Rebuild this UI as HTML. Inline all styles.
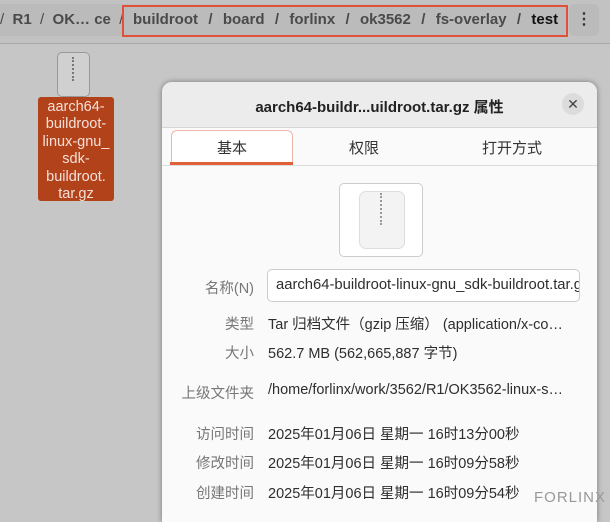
<!DOCTYPE html>
<html><head><meta charset="utf-8"><style>
body{margin:0;width:610px;height:514px;overflow:hidden;background:#c6c6c6;font-family:"Liberation Sans","Noto Sans CJK SC",sans-serif;position:relative}
.a{position:absolute}
.top{left:0;top:0;width:610px;height:43px;background:#c2c2c2;border-bottom:1px solid #a8a8a8}
.path{left:-6px;top:4px;width:572px;height:32px;background:#bbb;border-radius:6px}
.crumb{top:11px;font-size:15px;color:#4a4a4a;white-space:nowrap}
.box{left:122px;top:5px;width:442px;height:28px;border:2px solid #e0503a}
.kebab{left:569px;top:4px;width:30px;height:32px;background:#bbb;border-radius:6px;text-align:center;font-size:16px;line-height:32px;color:#333;font-weight:bold}
.zip{border:1px solid #999;background:#d0d0d0;border-radius:5px}
.lbl{left:38px;top:97px;width:76px;height:104px;background:#b2421a;border-radius:3px;color:#f5e0d8;font-size:14.5px;text-align:center;line-height:17.4px}
.dlg{left:162px;top:82px;width:435px;height:440px;background:#fafafa;border-radius:10px 10px 0 0;box-shadow:0 0 6px rgba(0,0,0,.4);overflow:hidden}
.hdr{left:0;top:0;width:435px;height:45px;background:#ececec;border-bottom:1px solid #d6d6d6}
.k{right:343px;font-size:14.5px;color:#777;text-align:right;white-space:nowrap}
.v{left:106px;font-size:14.5px;color:#2e2e2e;white-space:nowrap}
</style></head><body>
<div class="a top"></div>
<div class="a path"></div>
<div class="a crumb" style="left:0">/&nbsp;&nbsp;<b style="font-weight:600">R1</b>&nbsp;&nbsp;/&nbsp;&nbsp;<b style="font-weight:600">OK… ce</b>&nbsp;&nbsp;/</div>
<div class="a crumb" style="left:133px;font-weight:600;word-spacing:1px">buildroot &nbsp;/ &nbsp;board &nbsp;/ &nbsp;forlinx &nbsp;/ &nbsp;ok3562 &nbsp;/ &nbsp;fs-overlay &nbsp;/ &nbsp;<span style="color:#111">test</span></div>
<div class="a box"></div>
<div class="a kebab">⋮</div>
<div class="a zip" style="left:57px;top:52px;width:31px;height:43px"><div class="a" style="left:14px;top:4px;width:2px;height:24px;border-left:2px dotted #777"></div></div>
<div class="a lbl"><div style="padding-top:2px">aarch64-<br>buildroot-<br>linux-gnu_<br>sdk-<br>buildroot.<br>tar.gz</div></div>
<div class="a dlg">
 <div class="a hdr"></div>
 <div class="a" style="left:0;width:435px;top:14px;text-align:center;font-size:15px;font-weight:bold;color:#222">aarch64-buildr...uildroot.tar.gz 属性</div>
 <div class="a" style="left:400px;top:11px;width:22px;height:22px;border-radius:11px;background:#dcdcdc;text-align:center;line-height:22px;font-size:14px;color:#444">✕</div>
 <div class="a" style="left:9px;top:48px;width:120px;height:33px;border:1px solid #f0b8a8;border-bottom:none;border-radius:6px 6px 0 0;background:#fff"></div>
 <div class="a" style="left:8px;top:80px;width:123px;height:3px;background:#e0603a"></div>
 <div class="a" style="left:0;top:83px;width:435px;height:1px;background:#ddd"></div>
 <div class="a" style="left:55px;top:55px;font-size:15px;color:#333">基本</div>
 <div class="a" style="left:187px;top:55px;font-size:15px;color:#333">权限</div>
 <div class="a" style="left:320px;top:55px;font-size:15px;color:#333">打开方式</div>
 <div class="a" style="left:177px;top:101px;width:82px;height:72px;border:1px solid #ccc;border-radius:5px;background:#fff"></div>
 <div class="a" style="left:197px;top:109px;width:44px;height:56px;border:1px solid #ddd;border-radius:7px;background:#f3f3f3"><div class="a" style="left:20px;top:1px;width:2px;height:32px;border-left:2px dotted #999"></div></div>
 <div class="a" style="left:105px;top:187px;width:311px;height:31px;border:1px solid #ccc;border-radius:5px;background:#fff;overflow:hidden"><div class="a" style="left:8px;top:7px;font-size:14.8px;color:#2e2e2e;white-space:nowrap">aarch64-buildroot-linux-gnu_sdk-buildroot.tar.gz</div></div>
 <div class="a k" style="top:195px">名称(N)</div>
 <div class="a k" style="top:231px">类型</div><div class="a v" style="top:231px">Tar 归档文件（gzip 压缩） (application/x-co…</div>
 <div class="a k" style="top:260px">大小</div><div class="a v" style="top:260px">562.7 MB (562,665,887 字节)</div>
 <div class="a k" style="top:300px">上级文件夹</div><div class="a v" style="top:300px">/home/forlinx/work/3562/R1/OK3562-linux-s…</div>
 <div class="a k" style="top:341px">访问时间</div><div class="a v" style="top:341px">2025年01月06日 星期一 16时13分00秒</div>
 <div class="a k" style="top:370px">修改时间</div><div class="a v" style="top:370px">2025年01月06日 星期一 16时09分58秒</div>
 <div class="a k" style="top:400px">创建时间</div><div class="a v" style="top:400px">2025年01月06日 星期一 16时09分54秒</div>
</div>
<div class="a" style="left:534px;top:489px;font-size:15px;color:#999;letter-spacing:1px">FORLINX</div>
</body></html>
